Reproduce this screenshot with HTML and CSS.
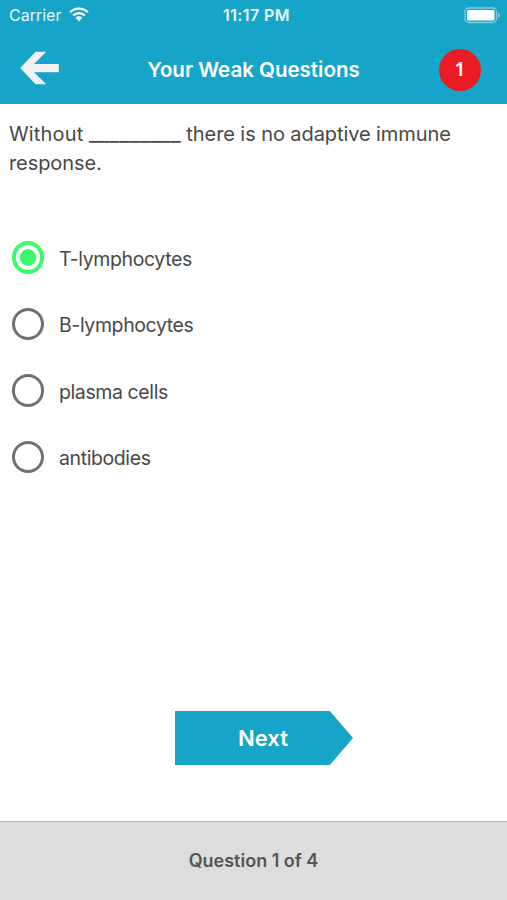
FILE: index.html
```html
<!DOCTYPE html>
<html lang="en">
<head>
<meta charset="utf-8">
<title>Your Weak Questions</title>
<link rel="stylesheet" href="styles.css">
</head>
<body>
<header class="header">
  <div class="status">
    <div class="status-left">
      <span class="carrier">Carrier</span>
      <svg class="wifi" width="20" height="15" viewBox="0 0 20 15">
        <g fill="none" stroke="#fff" stroke-width="2.3">
          <path d="M1.1 5.2a12.7 12.7 0 0 1 17.8 0"/>
          <path d="M4.2 8.5a8.2 8.2 0 0 1 11.6 0"/>
        </g>
        <path fill="#fff" d="M6.5 10.8a5 5 0 0 1 7 0L10 14.4z"/>
      </svg>
    </div>
    <span class="time">11:17 PM</span>
    <svg class="battery" width="38" height="17" viewBox="0 0 38 17">
      <rect x="1" y="1" width="31.5" height="14.5" rx="3.8" fill="none" stroke="#fff" stroke-opacity=".45" stroke-width="1.3"/>
      <rect x="3" y="3" width="27.5" height="10.5" rx="1.5" fill="#fff"/>
      <path d="M34.2 5.8c2 .8 2 4.2 0 5z" fill="#fff" fill-opacity=".55"/>
    </svg>
  </div>
  <div class="nav">
    <svg class="back" width="40" height="34" viewBox="0 0 40 34">
      <path fill="#f0f0f0" d="M15.5.8H26.3L14 13H38.8V21.2H14L26.3 33.3H15.5L.2 17z"/>
    </svg>
    <h1 class="title">Your Weak Questions</h1>
    <span class="badge">1</span>
  </div>
</header>
<main class="content">
  <p class="question"><span class="line"><span class="lead">Without</span> <span class="blank">_________</span> there is no adaptive immune</span> <span class="line">response.</span></p>
  <ul class="options">
    <li class="option"><span class="radio checked"></span><span class="label">T-lymphocytes</span></li>
    <li class="option"><span class="radio"></span><span class="label">B-lymphocytes</span></li>
    <li class="option"><span class="radio"></span><span class="label">plasma cells</span></li>
    <li class="option"><span class="radio"></span><span class="label">antibodies</span></li>
  </ul>
  <button class="next" type="button">Next</button>
</main>
<footer class="footer">Question 1 of 4</footer>
</body>
</html>
```

FILE: styles.css
```css
* { box-sizing: border-box; }
body {
  margin: 0;
  height: 900px;
  display: flex;
  flex-direction: column;
  overflow: hidden;
  background: #fff;
  color: #484848;
  font-family: Inter, "Liberation Sans", sans-serif;
}
.header {
  height: 103.5px;
  flex: none;
  background: #17a4c9;
  color: #fff;
}
.status {
  height: 30px;
  padding: 0 5px 0 9px;
  display: grid;
  grid-template-columns: 1fr auto 1fr;
  align-items: center;
}
.status-left { display: flex; align-items: center; gap: 8px; }
.carrier { font-size: 16px; color: #e6f6fa; }
.wifi { margin-top: -2px; }
.time { padding-left: 2px; font-size: 16px; font-weight: 600; letter-spacing: 0.4px; color: #e9f8fc; }
.battery { justify-self: end; }
.nav {
  height: 73px;
  padding: 0 26px 0 20px;
  display: grid;
  grid-template-columns: 1fr auto 1fr;
  align-items: center;
}
.back { margin-top: 2px; }
.title { margin: 6px 0 0; padding-left: 6px; font-size: 20.5px; line-height: 26px; font-weight: 600; }
.badge {
  justify-self: end;
  width: 42px;
  height: 42px;
  margin-top: 6px;
  border-radius: 50%;
  background: #ed1c24;
  font: 600 19px/41px "Noto Sans", sans-serif;
  text-align: center;
}
.content {
  flex: 1;
  display: flex;
  flex-direction: column;
  padding: 16.5px 9px 0;
}
.question { margin: 0; font-size: 20px; line-height: 29px; }
.line { display: block; white-space: nowrap; letter-spacing: -0.08px; }
.lead { letter-spacing: 0.15px; }
.blank { font-size: 22.4px; line-height: 0; letter-spacing: 0; }
.options { list-style: none; margin: 46px 0 0; padding: 0; }
.option {
  height: 66.5px;
  padding-left: 2.5px;
  display: flex;
  align-items: center;
  gap: 15px;
}
.radio {
  width: 32.5px;
  height: 32.5px;
  border: 3px solid #717171;
  border-radius: 50%;
}
.radio.checked {
  border: 4px solid #38fa6b;
  background: radial-gradient(circle, #38fa6b 7.8px, #fff 8.6px);
}
.label { font-size: 19.5px; line-height: 26px; letter-spacing: -0.4px; padding-top: 3px; }
.next {
  width: 178px;
  height: 54px;
  margin: 221px 0 0 166px;
  padding: 0 2px 0 0;
  border: 0;
  background: #17a4c9;
  clip-path: polygon(0 0, 87% 0, 100% 50%, 87% 100%, 0 100%);
  color: #fff;
  font: 600 22px/54px Inter, "Liberation Sans", sans-serif;
}
.footer {
  height: 79px;
  flex: none;
  border-top: 1px solid #b3b3b3;
  background: #ddd;
  color: #555;
  font-size: 18px;
  font-weight: 600;
  line-height: 77px;
  text-align: center;
}
```
